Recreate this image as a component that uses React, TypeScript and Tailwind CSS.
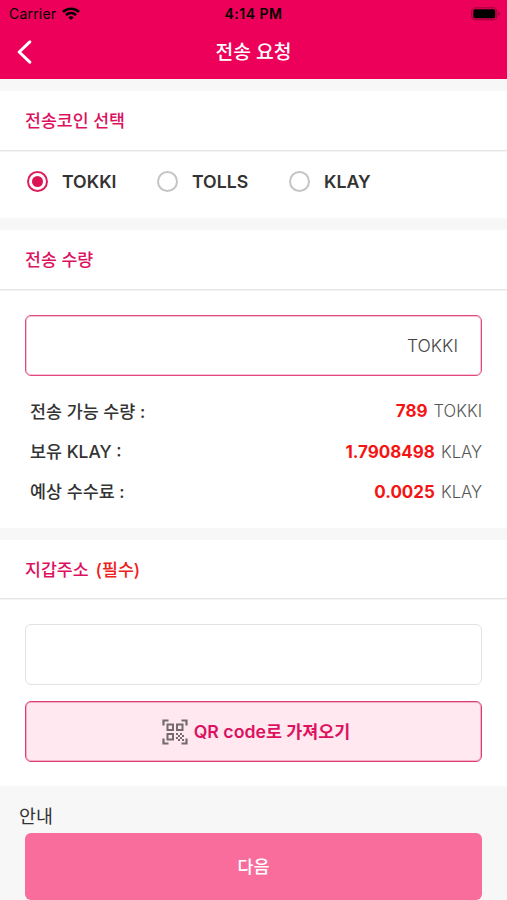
import { useState } from "react";

const coins = [
  { name: "TOKKI", width: "w-[130px]" },
  { name: "TOLLS", width: "w-[132px]" },
  { name: "KLAY", width: "w-[100px]" },
];

const amounts = [
  { label: "전송 가능 수량 :", value: "789", unit: "TOKKI" },
  { label: "보유 KLAY :", value: "1.7908498", unit: "KLAY" },
  { label: "예상 수수료 :", value: "0.0025", unit: "KLAY" },
];

function WifiIcon() {
  return (
    <svg width="18" height="13" viewBox="0 0 18 13" fill="none" stroke="#000" strokeWidth="2.5">
      <path d="M1 5C5.4 0.6 12.6 0.6 17 5" />
      <path d="M4 8.1C6.8 5.4 11.2 5.4 14 8.1" />
      <path d="M6.3 10.2C7.8 8.8 10.2 8.8 11.7 10.2L9 13Z" fill="#000" stroke="none" />
    </svg>
  );
}

function BatteryIcon() {
  return (
    <svg width="30" height="14" viewBox="0 0 30 14">
      <rect x="0.8" y="0.8" width="25" height="12" rx="3.2" fill="none" stroke="#000" strokeOpacity="0.35" />
      <rect x="2.3" y="2.3" width="22" height="9" rx="1.8" fill="#000" />
      <path d="M27.3 4.8C29.3 5.4 29.3 8.2 27.3 8.8Z" fill="#000" fillOpacity="0.4" />
    </svg>
  );
}

function QrIcon() {
  return (
    <svg width="26" height="26" viewBox="0 0 26 26" fill="none" stroke="#766a70" strokeWidth="2">
      <path d="M1.5 6.5V1.5H6.5M19.5 1.5H24.5V6.5M24.5 19.5V24.5H19.5M6.5 24.5H1.5V19.5" strokeWidth="2.2" />
      <rect x="5.5" y="5.5" width="5.5" height="5.5" />
      <rect x="15" y="5.5" width="5.5" height="5.5" />
      <rect x="5.5" y="15" width="5.5" height="5.5" />
      <path
        d="M14 14h2v2h-2zM18 14h2v2h-2zM16 16h2v2h-2zM20 16h2v2h-2zM14 18h2v2h-2zM18 18h2v2h-2zM16 20h2v2h-2zM20 20h2v2h-2z"
        fill="#766a70"
        stroke="none"
      />
    </svg>
  );
}

function SectionTitle({ children }: { children: React.ReactNode }) {
  return (
    <div className="h-[60px] border-b border-[#e6e6e6] shadow-[0_1px_0_#f4f4f4] px-[25px] pt-px flex items-center text-[17.3px] font-medium text-[#dc1260]">
      {children}
    </div>
  );
}

export default function App() {
  const [coin, setCoin] = useState("TOKKI");

  return (
    <div className="h-[900px] overflow-hidden bg-[#f7f7f7] font-['Inter','Noto_Sans_CJK_KR',sans-serif] text-[#333] whitespace-nowrap">
      <header className="h-[79px] bg-[#ed0059]">
        <div className="h-[27px] grid grid-cols-3 items-center text-black text-[14px] leading-none">
          <div className="flex items-center gap-[6px] pl-[9px]">
            <span className="tracking-[0.2px]">Carrier</span>
            <WifiIcon />
          </div>
          <span className="text-center font-semibold tracking-[0.5px]">4:14 PM</span>
          <div className="flex justify-end pr-[6px]">
            <BatteryIcon />
          </div>
        </div>
        <div className="h-[50px] grid grid-cols-[60px_1fr_60px] items-center text-white">
          <button className="pl-[17px]">
            <svg width="16" height="24" viewBox="0 0 16 24" fill="none" stroke="#fff" strokeWidth="3" strokeLinecap="round" strokeLinejoin="round">
              <path d="M12.8 1.8L2.2 12L12.8 22.2" />
            </svg>
          </button>
          <h1 className="pt-px text-center text-[19.3px] font-medium">전송 요청</h1>
        </div>
      </header>

      <section className="mt-3 h-[127px] bg-white">
        <SectionTitle>전송코인 선택</SectionTitle>
        <div className="h-[61px] pt-px flex items-center pl-[27px]">
          {coins.map((item) => (
            <button key={item.name} onClick={() => setCoin(item.name)} className={`flex items-center gap-[14px] ${item.width}`}>
              {coin === item.name ? (
                <span className="size-[21px] shrink-0 rounded-full border-2 border-[#dc1e5c] grid place-items-center">
                  <span className="size-[11px] rounded-full bg-[#dc1454]" />
                </span>
              ) : (
                <span className="size-[21px] shrink-0 rounded-full border-2 border-[#c4c4c4]" />
              )}
              <span className="text-[17.7px] font-semibold">{item.name}</span>
            </button>
          ))}
        </div>
      </section>

      <section className="mt-3 h-[298px] bg-white">
        <SectionTitle>전송 수량</SectionTitle>
        <div className="px-[25px] pt-[25px]">
          <div className="h-[61px] rounded-md border border-[#e04880] shadow-[inset_0_0_0_1px_#f6c4d6] pl-6 pr-[23px] pt-px flex items-center justify-end text-[17.5px] font-light text-[#444]">
            TOKKI
          </div>
          <div className="pt-[15px] pl-[5px]">
            {amounts.map((row) => (
              <div key={row.label} className="h-[40.3px] pt-px flex items-center justify-between text-[17.4px]">
                <span className="font-medium">{row.label}</span>
                <span className="flex items-baseline gap-[6px] pt-px text-[17px]">
                  <b className="font-bold text-[#f51414]">{row.value}</b>
                  <span className="text-[16.6px] font-light text-[#555]">{row.unit}</span>
                </span>
              </div>
            ))}
          </div>
        </div>
      </section>

      <section className="mt-3 h-[246px] bg-white">
        <div className="h-[59px] [&>div]:h-[59px]">
          <SectionTitle>
            지갑주소<span className="ml-[7px] text-[#ee2020]">(필수)</span>
          </SectionTitle>
        </div>
        <div className="px-[25px] pt-[25px]">
          <input className="block w-full h-[61px] rounded-md border border-[#e2e2e2] px-4 outline-none" />
          <button className="mt-4 w-full h-[61px] rounded-md border border-[#dc3c74] shadow-[inset_0_0_0_1px_#f3b0c6] bg-[#ffe8f0] pl-[5px] flex items-center justify-center gap-[6px] text-[17.7px] font-semibold text-[#dc1260]">
            <QrIcon />
            <span className="pt-px">
              QR code<span className="text-[17.4px]">로 가져오기</span>
            </span>
          </button>
        </div>
      </section>

      <footer className="pt-[17px]">
        <p className="pl-[19px] h-[30px] text-[18.4px] leading-[26px]">안내</p>
        <button className="block mx-[25px] w-[457px] h-[67px] rounded-md bg-[#f96d9c] pt-px text-[17.4px] font-medium text-white">다음</button>
      </footer>
    </div>
  );
}
